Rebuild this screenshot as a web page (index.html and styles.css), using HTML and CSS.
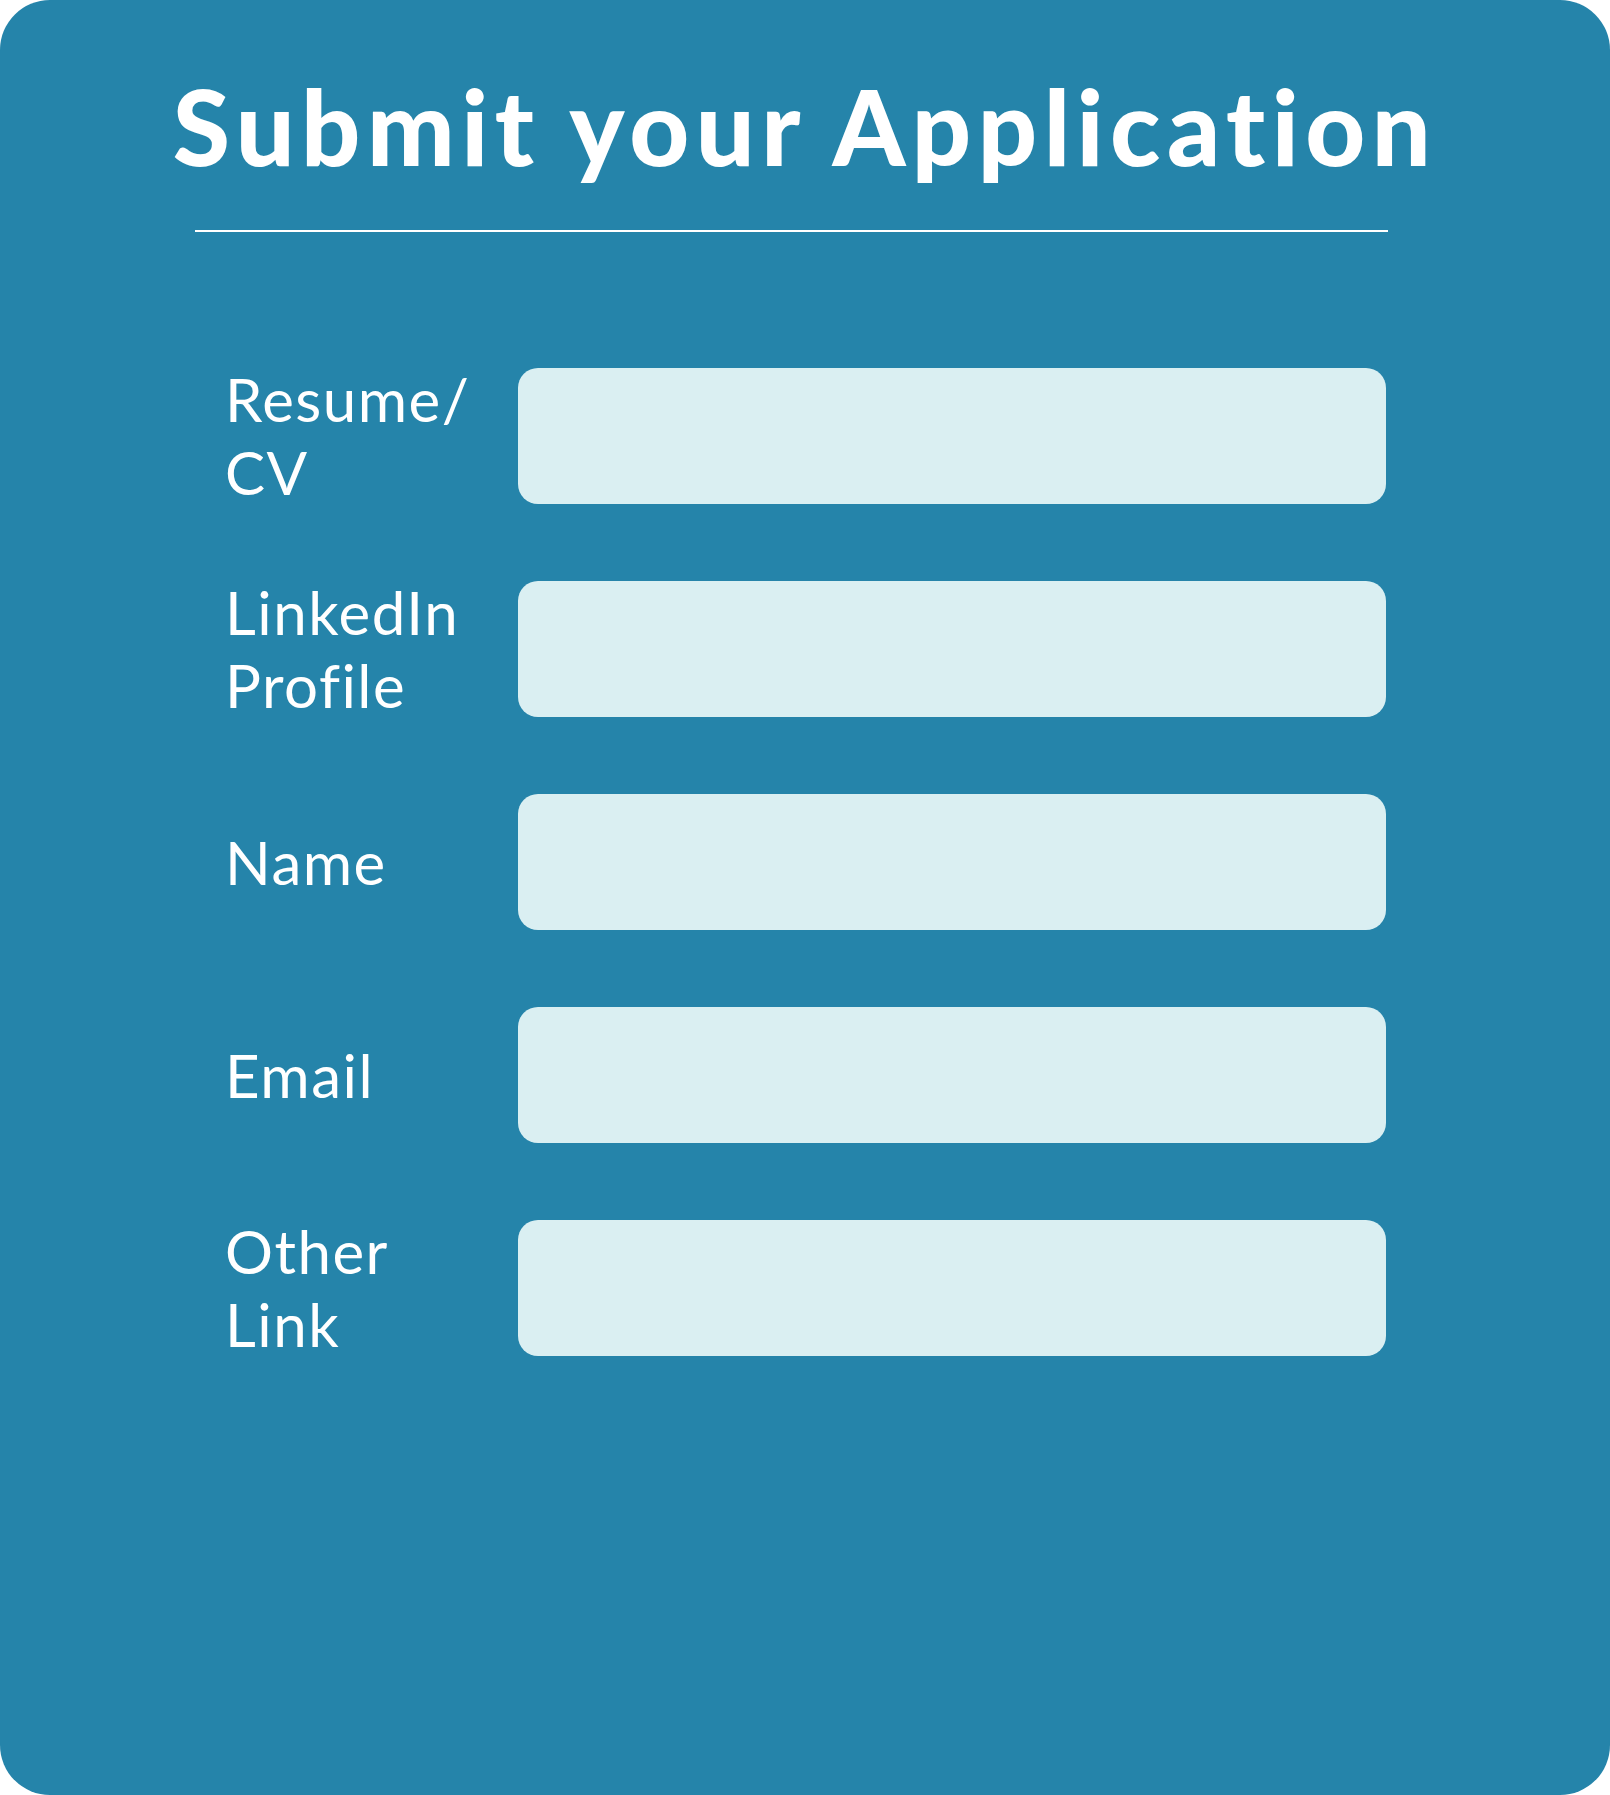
FILE: index.html
```html
<!DOCTYPE html>
<html lang="en">
<head>
<meta charset="utf-8">
<title>Submit your Application</title>
<link rel="stylesheet" href="styles.css">
</head>
<body>
<main class="card">
  <h1 class="title">Submit your Application</h1>
  <hr class="rule">
  <form class="form">
    <div class="row">
      <label class="label" for="resume">Resume/<br>CV</label>
      <input class="field" id="resume" type="text">
    </div>
    <div class="row">
      <label class="label" for="linkedin">LinkedIn<br>Profile</label>
      <input class="field" id="linkedin" type="text">
    </div>
    <div class="row">
      <label class="label" for="name">Name</label>
      <input class="field" id="name" type="text">
    </div>
    <div class="row">
      <label class="label" for="email">Email</label>
      <input class="field" id="email" type="text">
    </div>
    <div class="row">
      <label class="label" for="other">Other<br>Link</label>
      <input class="field" id="other" type="text">
    </div>
  </form>
</main>
</body>
</html>
```
FILE: styles.css
```css
html, body {
  margin: 0;
  padding: 0;
  background: #ffffff;
}
.card {
  box-sizing: border-box;
  width: 1610px;
  height: 1795px;
  background: #2584aa;
  border-radius: 50px;
  padding-top: 64px;
  display: flex;
  flex-direction: column;
  align-items: center;
}
.title {
  margin: 0;
  font-family: Lato, "Open Sans", sans-serif;
  font-weight: 900;
  font-size: 104px;
  line-height: 124px;
  color: #ffffff;
  letter-spacing: 6.5px;
  text-align: center;
}
.rule {
  margin: 42px 0 0 -27px;
  width: 1193px;
  border: none;
  height: 2px;
  background: #ffffff;
}
.form {
  margin-top: 136px;
  display: flex;
  flex-direction: column;
  gap: 77px;
  width: 1161px;
  padding-left: 225px;
  align-self: flex-start;
}
.row {
  display: flex;
  align-items: center;
  height: 136px;
}
.label {
  width: 293px;
  flex: none;
  font-family: Lato, "Open Sans", sans-serif;
  font-weight: 400;
  font-size: 60px;
  line-height: 73px;
  letter-spacing: 1.5px;
  color: #ffffff;
}
.field {
  box-sizing: border-box;
  width: 868px;
  height: 136px;
  border: none;
  border-radius: 20px;
  background: #daeff2;
  margin: 0;
  padding: 0;
  outline: none;
}
```
